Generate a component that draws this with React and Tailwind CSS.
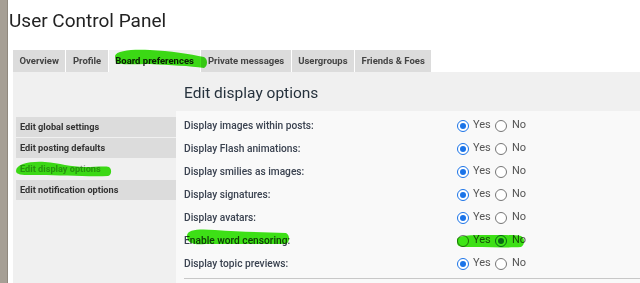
const tabs = ["Overview", "Profile", "Board preferences", "Private messages", "Usergroups", "Friends & Foes"];

const navItems = [
  "Edit global settings",
  "Edit posting defaults",
  "Edit display options",
  "Edit notification options",
];

const options = [
  { label: "Display images within posts:", yes: true },
  { label: "Display Flash animations:", yes: true },
  { label: "Display smilies as images:", yes: true },
  { label: "Display signatures:", yes: true },
  { label: "Display avatars:", yes: true },
  { label: "Enable word censoring:", yes: false },
  { label: "Display topic previews:", yes: true },
];

const Radio = ({ checked }) =>
  checked ? (
    <span className="flex h-[12px] w-[12px] items-center justify-center rounded-full border-[1.5px] border-[#1a73e8] bg-white">
      <span className="h-[6px] w-[6px] rounded-full bg-[#1a73e8]" />
    </span>
  ) : (
    <span className="h-[12px] w-[12px] rounded-full border border-[#767676] bg-white" />
  );

// green marker strokes drawn over the screenshot
const Highlights = () => (
  <svg
    className="pointer-events-none absolute left-0 top-0 mix-blend-multiply"
    width="640"
    height="283"
    viewBox="0 0 640 283"
  >
    <g fill="#3ee616">
      <path d="M115,56 C116,50 135,49 150,50 C170,51 190,54 204,57 C208,59 208,66 204,68 C190,66 170,65 150,64 C135,64 120,65 116,63 Z" />
      <path d="M16,171 C16,164 30,161 45,162 C60,163 70,167 85,167 C95,167 105,166 109,167 C112,169 112,175 108,176 C90,177 60,175 40,175 C28,175 16,176 16,171 Z" />
      <path d="M187,236 C187,229 200,229 215,230 C240,232 265,232 286,233 C290,235 290,242 286,244 C260,244 230,244 205,244 C193,245 187,243 187,236 Z" />
      <path d="M457,240 C457,235 470,235 490,235 C505,235 515,235 521,236 C525,238 525,245 521,247 C505,248 480,247 462,247 C457,246 457,244 457,240 Z" />
    </g>
  </svg>
);

export default function App() {
  return (
    <div className="relative flex h-[283px] w-[640px] overflow-hidden bg-white font-['Roboto',sans-serif] text-[#333]">
      <div className="w-[8px] shrink-0 border-r border-[#8f887e] bg-[#a69f95]" />
      <div className="flex min-w-0 flex-1 flex-col">
        <h1 className="ml-[1px] mt-[8px] h-[25px] text-[19px] leading-[25px] text-[#222]">User Control Panel</h1>

        <div className="ml-[5px] mt-[17px] flex gap-[1px]">
          {tabs.map((t) => (
            <div
              key={t}
              className={`flex h-[22px] items-center px-[6.5px] text-[9.5px] font-bold ${
                t === "Board preferences" ? "bg-[#f0f0f0] text-[#222]" : "bg-[#dcdcdc] text-[#444]"
              }`}
            >
              {t}
            </div>
          ))}
        </div>

        <div className="ml-[5px] flex flex-1 bg-[#f0f0f0]">
          <div className="ml-[3px] w-[160px] shrink-0 pt-[45px]">
            {navItems.map((n) => (
              <div
                key={n}
                className={`mb-[1px] flex h-[20px] items-center px-[4px] text-[9.2px] font-bold ${
                  n === "Edit display options" ? "bg-[#f0f0f0] text-[#9aa29a]" : "bg-[#dcdcdc] text-[#333]"
                }`}
              >
                {n}
              </div>
            ))}
          </div>

          <div className="flex min-w-0 flex-1 flex-col">
            <h2 className="flex h-[39px] items-center pl-[8px] pt-[5px] text-[15.5px] text-[#26323d]">
              Edit display options
            </h2>
            <div className="flex-1 bg-[#f9f9f9] pl-[8px] pt-[3px]">
              {options.map((o) => (
                <div key={o.label} className="flex h-[23px] items-center">
                  <div className="w-[273px] shrink-0 text-[10.2px] font-medium text-[#3a4250]">{o.label}</div>
                  <div className="flex items-center text-[11px] text-[#555]">
                    <Radio checked={o.yes} />
                    <span className="ml-[4px] w-[22px]">Yes</span>
                    <Radio checked={!o.yes} />
                    <span className="ml-[5px]">No</span>
                  </div>
                </div>
              ))}
              <div className="mt-[3px] border-t border-[#c8c8c8]" />
            </div>
          </div>
        </div>
      </div>
      <Highlights />
    </div>
  );
}
